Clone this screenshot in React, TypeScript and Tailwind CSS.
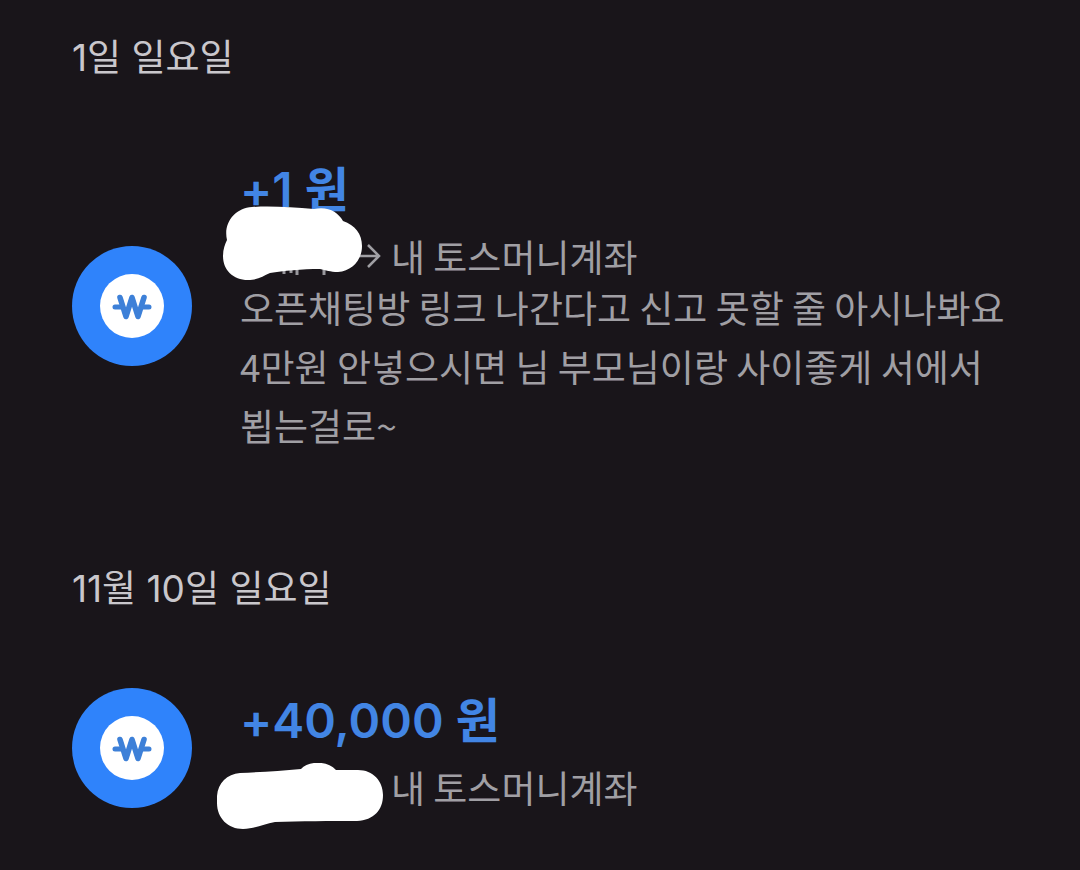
import type { ReactNode } from "react";

// Types
interface Transaction {
  id: string;
  date: string;
  amount: number;
  account: string;
  message: string | null;
  mask: ReactNode;
}

// Hand-drawn marks that hide the sender
function ShortMask() {
  return (
    <svg
      viewBox="223 206 140 75"
      className="absolute -left-[17px] -top-7 h-[75px] w-[140px]"
      aria-hidden="true"
    >
      <g stroke="#99989d" strokeWidth="3">
        <path d="M284 262V274M291 262V273M297 262V275M324 262V275" />
      </g>
      <path
        d="M252 207C270 206 292 207 314 209C328 206 338 212 343 221C355 225 362 234 362 246C362 260 352 271 338 272C330 272 326 270 320 269C302 269 283 271 270 273C263 276 258 280 248 280C233 280 223 270 223 256C223 249 225 244 227 240C223 223 235 208 252 207Z"
        fill="#fff"
      />
    </svg>
  );
}

function LongMask() {
  return (
    <svg
      viewBox="217 763 166 67"
      className="absolute -left-[23px] -top-0.5 h-[67px] w-[166px]"
      aria-hidden="true"
    >
      <path
        d="M240 773C260 772 281 771 301 769C308 761 327 760 336 770H358C373 770 383 781 383 795C383 810 374 820 357 821C330 821 300 821 275 822C263 824 255 829 243 829C228 829 217 818 217 803V796C218 783 227 774 240 773Z"
        fill="#fff"
      />
    </svg>
  );
}

const transactions: Transaction[] = [
  {
    id: "t1",
    date: "1일 일요일",
    amount: 1,
    account: "내 토스머니계좌",
    message:
      "오픈채팅방 링크 나간다고 신고 못할 줄 아시나봐요 4만원 안넣으시면 님 부모님이랑 사이좋게 서에서 뵙는걸로~",
    mask: <ShortMask />,
  },
  {
    id: "t2",
    date: "11월 10일 일요일",
    amount: 40000,
    account: "내 토스머니계좌",
    message: null,
    mask: <LongMask />,
  },
];

function WonIcon() {
  return (
    <svg viewBox="0 0 120 120" className="h-[120px] w-[120px] shrink-0" aria-hidden="true">
      <circle cx="60" cy="60" r="60" fill="#2f83fb" />
      <circle cx="60" cy="60" r="32" fill="#fff" />
      <g fill="none" stroke="#3d80d8" strokeLinecap="round" strokeLinejoin="round">
        <path d="M48 51.500L54 70.500L60 51.500L66 70.500L72 51.500" strokeWidth="5.600" />
        <path d="M43 61H50M70 61H77" strokeWidth="5" />
      </g>
    </svg>
  );
}

function TransactionItem({ transaction }: { transaction: Transaction }) {
  return (
    <div className="flex items-center gap-12">
      <WonIcon />
      <div className="min-w-0 flex-1 font-['Noto_Sans_CJK_KR',sans-serif]">
        <p className="font-['Inter','Noto_Sans_CJK_KR',sans-serif] text-[48px] leading-[68px] font-semibold text-[#4285e4]">
          +{transaction.amount.toLocaleString("en-US")} 원
        </p>

        {/* Sender and receiving account */}
        <div className="mt-2.5 flex items-center text-[37px] leading-[44px]">
          <span className="relative h-11 w-[117px] shrink-0">{transaction.mask}</span>
          <svg
            viewBox="0 0 24 24"
            className="mr-2.5 h-6 w-6 shrink-0"
            fill="none"
            stroke="currentColor"
            strokeWidth="2.500"
            aria-hidden="true"
          >
            <path d="M0 12H22M11 1L22 12L11 23" />
          </svg>
          <span>{transaction.account}</span>
        </div>

        {transaction.message && (
          <p className="text-[37px] leading-[59px] break-keep">{transaction.message}</p>
        )}
      </div>
    </div>
  );
}

export default function App() {
  return (
    <main className="min-h-screen space-y-[106px] bg-[#19151a] pt-[30px] pr-14 pl-[72px] font-['Inter','Noto_Sans_CJK_KR',sans-serif] text-[#a09fa4]">
      {transactions.map((transaction) => (
        <section key={transaction.id}>
          <h2 className="mb-[70px] text-[37px] leading-[56px] text-[#c9c7cc]">
            {transaction.date}
          </h2>
          <TransactionItem transaction={transaction} />
        </section>
      ))}
    </main>
  );
}
